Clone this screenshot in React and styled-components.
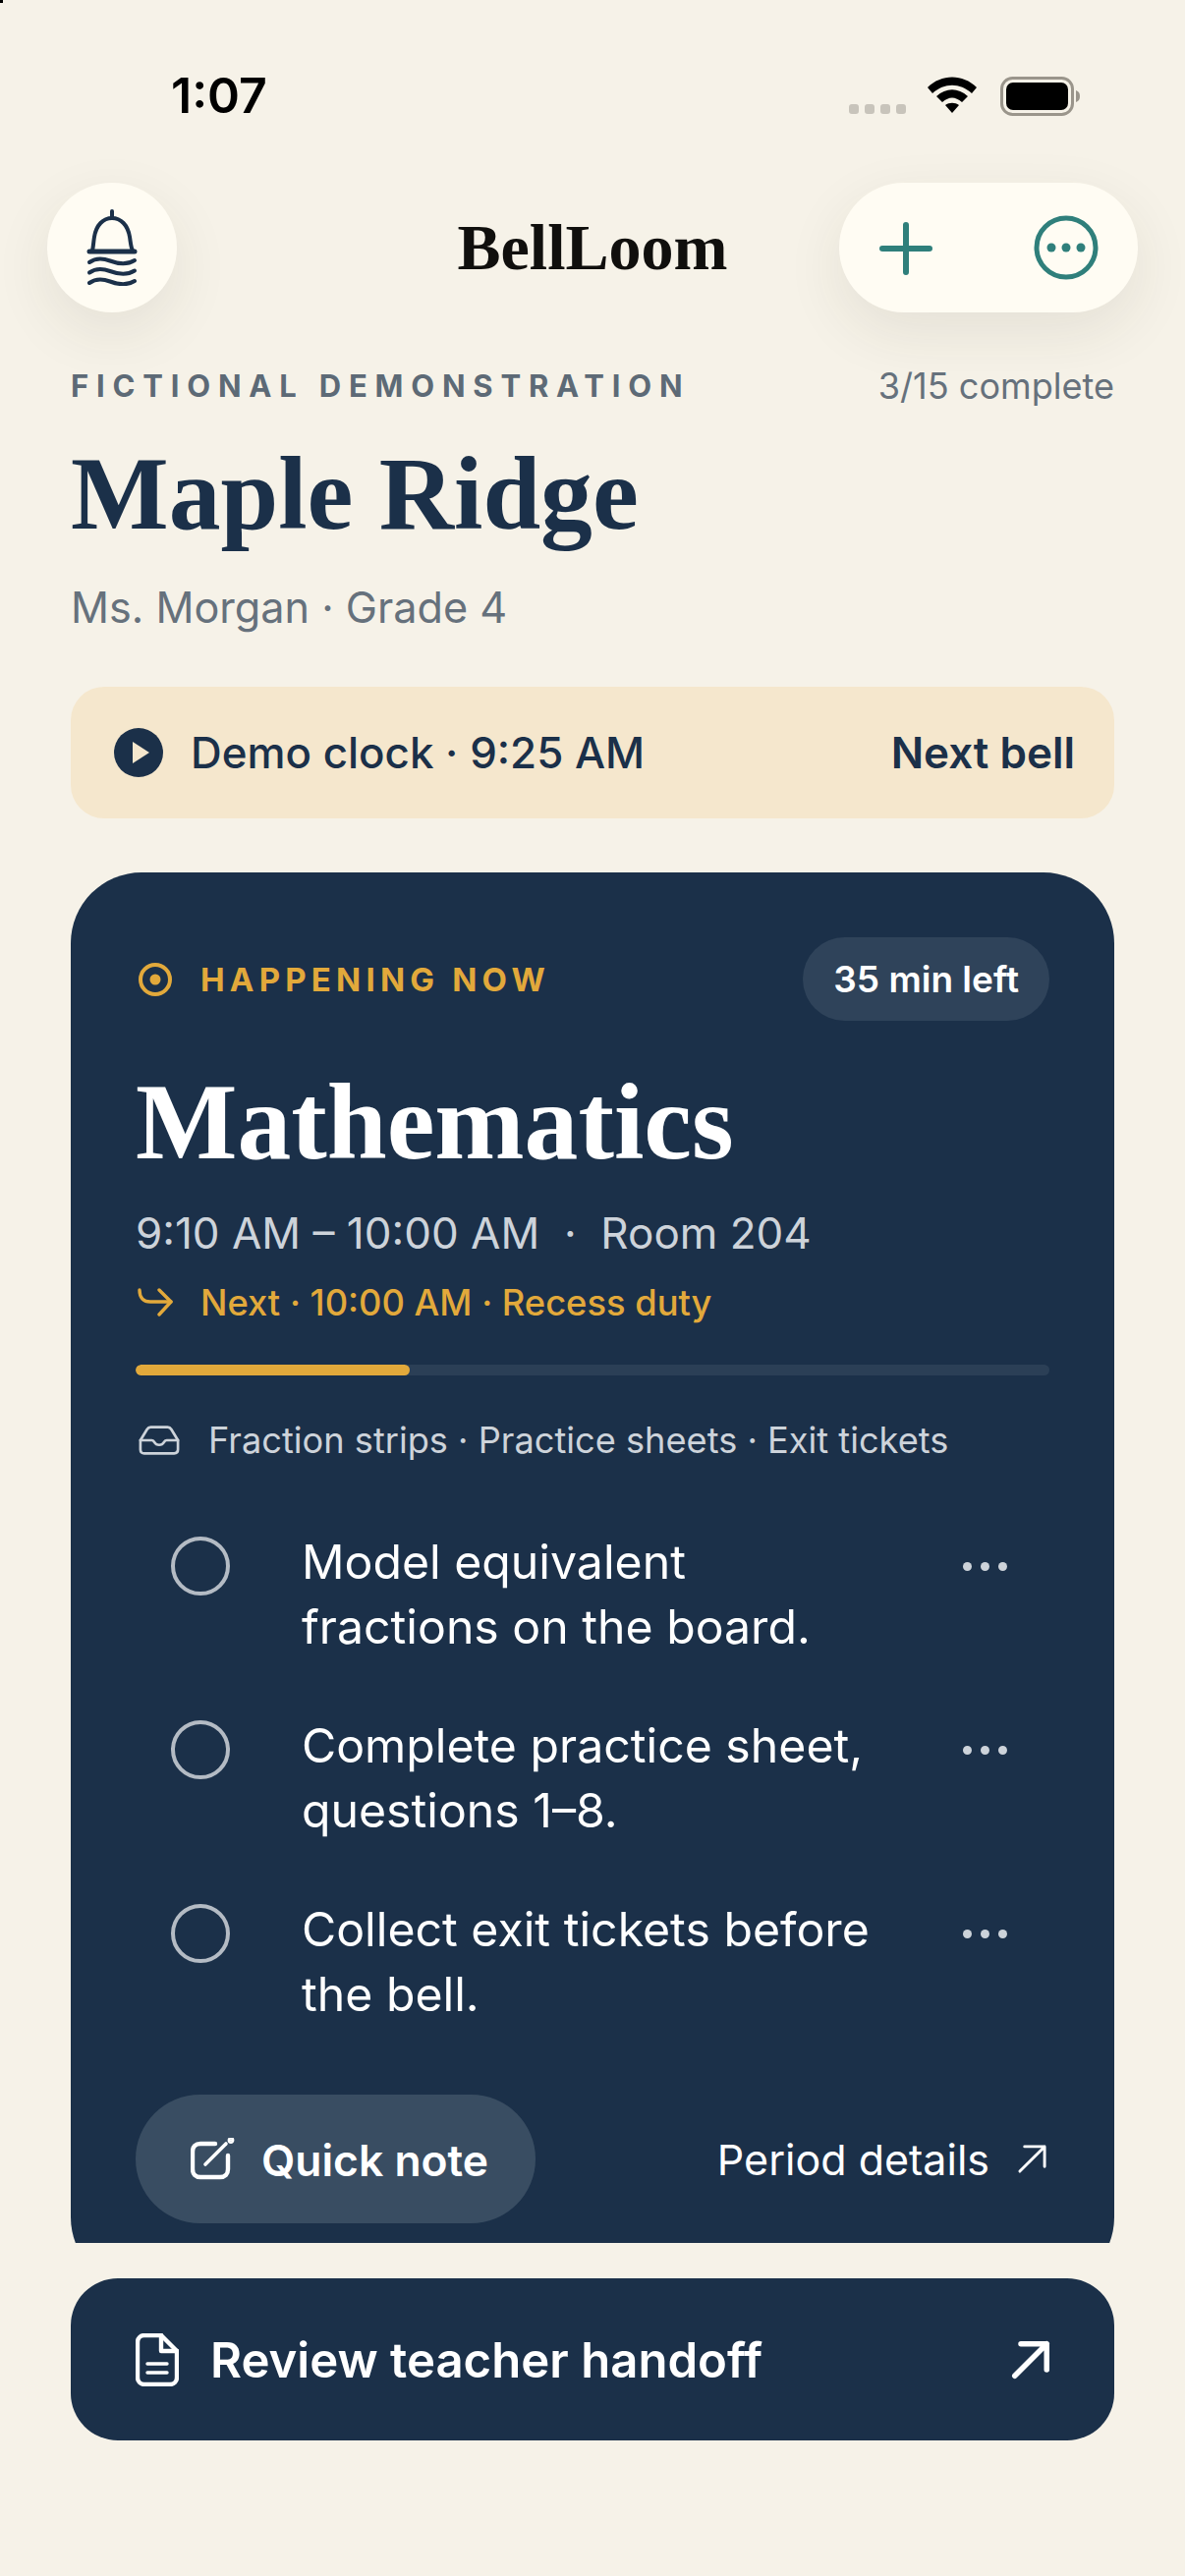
import React from "react";
import styled, { createGlobalStyle } from "styled-components";

const GlobalStyle = createGlobalStyle`
  html, body {
    margin: 0;
    padding: 0;
    background: #f6f2e8;
  }
  * {
    box-sizing: border-box;
  }
`;

const navy = "#1b3049";
const gold = "#e2a93b";
const teal = "#2f7f7b";
const serif = '"Liberation Serif", serif';
const sans = 'Inter, "Noto Sans", sans-serif';

const Page = styled.div`
  position: relative;
  width: 1206px;
  height: 2622px;
  background: #f6f2e8;
  font-family: ${sans};
  color: ${navy};
  overflow: hidden;
`;

const CornerMark = styled.div`
  position: absolute;
  top: 0;
  left: 0;
  width: 3px;
  height: 3px;
  background: #000;
`;

const StatusBar = styled.div`
  height: 186px;
  padding: 0 106px 0 174px;
  display: flex;
  justify-content: space-between;
  align-items: flex-start;
`;

const Clock = styled.div`
  margin-top: 67px;
  font-size: 50px;
  line-height: 60px;
  font-weight: 600;
  color: #000;
`;

const StatusIcons = styled.div`
  margin-top: 78px;
  display: flex;
  align-items: flex-start;
`;

const Signal = styled.div`
  display: flex;
  gap: 6px;
  margin-top: 28px;
  margin-right: 22px;
`;

const SignalDot = styled.span`
  width: 10px;
  height: 10px;
  border-radius: 3px;
  background: #c8c4bb;
`;

const WifiSlot = styled.div`
  margin-right: 24px;
`;

const Header = styled.header`
  height: 132px;
  padding: 0 48px;
  display: grid;
  grid-template-columns: 1fr auto 1fr;
  align-items: center;
`;

const BellButton = styled.div`
  width: 132px;
  height: 132px;
  border-radius: 50%;
  background: #fffcf3;
  box-shadow: 0 20px 60px rgba(60, 50, 30, 0.09);
  display: flex;
  align-items: center;
  justify-content: center;
`;

const Brand = styled.div`
  font-family: ${serif};
  font-size: 66px;
  font-weight: 700;
  color: #100f0d;
`;

const ActionPill = styled.div`
  justify-self: end;
  width: 304px;
  height: 132px;
  border-radius: 66px;
  background: #fffcf3;
  box-shadow: 0 20px 60px rgba(60, 50, 30, 0.09);
  display: flex;
  align-items: center;
  justify-content: space-between;
  padding: 0 40px 0 41px;
`;

const PlusSlot = styled.div`
  display: flex;
  margin-top: 2px;
`;

const Content = styled.main`
  padding: 0 72px;
`;

const MetaRow = styled.div`
  margin-top: 56px;
  display: flex;
  justify-content: space-between;
  align-items: center;
`;

const Eyebrow = styled.div`
  font-size: 31px;
  line-height: 38px;
  font-weight: 700;
  letter-spacing: 7.8px;
  color: #5d6a76;
`;

const Progress = styled.div`
  font-size: 36.1px;
  line-height: 38px;
  color: #66717c;
`;

const SchoolName = styled.h1`
  margin: 33px 0 0;
  font-family: ${serif};
  font-size: 105.6px;
  line-height: 116px;
  font-weight: 700;
  color: ${navy};
`;

const Teacher = styled.div`
  margin-top: 29px;
  font-size: 43.2px;
  line-height: 56px;
  color: #66717c;
`;

const ClockBar = styled.div`
  margin-top: 53px;
  height: 134px;
  border-radius: 34px;
  background: #f5e7cd;
  padding: 0 40px 0 44px;
  display: flex;
  align-items: center;
  justify-content: space-between;
`;

const ClockLabel = styled.div`
  display: flex;
  align-items: center;
  gap: 28px;
  font-size: 43.9px;
  font-weight: 500;
`;

const NextBell = styled.div`
  font-size: 44px;
  font-weight: 600;
`;

const CardClip = styled.div`
  margin-top: 55px;
  height: 1395px;
  overflow: hidden;
`;

const Card = styled.section`
  border-radius: 72px;
  background: ${navy};
  padding: 66px 66px 40px;
  height: 1441px;
`;

const CardTop = styled.div`
  display: flex;
  justify-content: space-between;
  align-items: center;
`;

const NowLabel = styled.div`
  display: flex;
  align-items: center;
  gap: 29px;
  padding-left: 3px;
  font-size: 33px;
  font-weight: 700;
  letter-spacing: 5.2px;
  color: ${gold};
`;

const TimeLeft = styled.div`
  height: 85px;
  padding: 0 31px;
  border-radius: 43px;
  background: #2f435a;
  color: #fff;
  font-size: 37px;
  font-weight: 600;
  display: flex;
  align-items: center;
`;

const Subject = styled.h2`
  margin: 38px 0 0;
  font-family: ${serif};
  font-size: 109.6px;
  line-height: 130px;
  font-weight: 700;
  color: #fff;
`;

const Schedule = styled.div`
  margin-top: 20px;
  font-size: 44px;
  line-height: 56px;
  color: #cdd3da;
  white-space: pre;
`;

const NextUp = styled.div`
  margin-top: 20px;
  padding-left: 2px;
  display: flex;
  align-items: center;
  gap: 28px;
  font-size: 36.3px;
  line-height: 46px;
  font-weight: 500;
  color: ${gold};
`;

const Track = styled.div`
  margin-top: 40px;
  height: 11px;
  border-radius: 6px;
  background: #2b3f56;
  overflow: hidden;
`;

const TrackFill = styled.div`
  height: 100%;
  border-radius: 6px;
  background: ${gold};
`;

const Materials = styled.div`
  margin-top: 44px;
  padding-left: 3px;
  display: flex;
  align-items: center;
  gap: 29px;
  font-size: 36.2px;
  line-height: 44px;
  color: #cdd3da;
`;

const TaskList = styled.ul`
  list-style: none;
  margin: 69px 0 0;
  padding: 0;
  display: flex;
  flex-direction: column;
  gap: 56px;
`;

const Task = styled.li`
  display: flex;
  align-items: flex-start;
  padding-left: 36px;
`;

const TaskCircle = styled.span`
  flex: none;
  margin-top: 7px;
  width: 60px;
  height: 60px;
  border-radius: 50%;
  border: 4px solid #b4bbc4;
`;

const TaskText = styled.div`
  margin-left: 73px;
  font-size: 48.2px;
  line-height: 65.5px;
  color: #fff;
  max-width: 590px;
`;

const TaskDots = styled.div`
  margin-left: auto;
  margin-right: 43px;
  margin-top: 33px;
  display: flex;
  gap: 9px;
`;

const Dot = styled.span`
  width: 9px;
  height: 9px;
  border-radius: 50%;
  background: #cdd3da;
`;

const CardFooter = styled.div`
  margin-top: 70px;
  display: flex;
  justify-content: space-between;
  align-items: center;
`;

const QuickNote = styled.div`
  width: 407px;
  height: 131px;
  border-radius: 66px;
  background: #394d62;
  color: #fff;
  display: flex;
  align-items: center;
  gap: 26px;
  padding-left: 56px;
  font-size: 44.4px;
  font-weight: 600;
`;

const NoteLabel = styled.span`
  margin-top: 2px;
`;

const DetailsLink = styled.div`
  display: flex;
  align-items: center;
  gap: 28px;
  padding-right: 2px;
  font-size: 43px;
  color: #fff;
`;

const HandoffButton = styled.div`
  margin-top: 36px;
  height: 165px;
  border-radius: 48px;
  background: ${navy};
  color: #fff;
  display: flex;
  align-items: center;
  justify-content: space-between;
  padding: 0 65px 0 66px;
  font-size: 49.1px;
  font-weight: 600;
`;

const HandoffLabel = styled.div`
  display: flex;
  align-items: center;
  gap: 32px;
`;

const WifiIcon = () => (
  <svg width="50" height="38" viewBox="0 0 50 38">
    <path d="M0 11 C14 -3 36 -3 50 11 L45 17 C33 6 17 6 5 17Z" fill="#000" />
    <path d="M9 20 C19 11 31 11 41 20 L35 26 C28 20 22 20 15 26Z" fill="#000" />
    <path d="M18 29 C22 26 28 26 32 29 L25 37Z" fill="#000" />
  </svg>
);

const BatteryIcon = () => (
  <svg width="82" height="40" viewBox="0 0 82 40">
    <rect x="1.5" y="1.5" width="72" height="37" rx="11" fill="none" stroke="#9a958b" strokeWidth="3" />
    <rect x="6" y="6" width="63" height="28" rx="7" fill="#000" />
    <path d="M77 14 C80 15 81 17 81 20 C81 23 80 25 77 26Z" fill="#9a958b" />
  </svg>
);

const BellIcon = () => (
  <svg width="52" height="78" viewBox="0 0 52 78" fill="none" stroke={navy} strokeWidth="4" strokeLinecap="round" strokeLinejoin="round">
    <path d="M26 2V9" />
    <path d="M6 42C7 38 7 34 8 28C10 16 17 9 26 9C35 9 42 16 44 28C45 34 45 38 47 42" />
    <path d="M3 43H49" strokeWidth="5" />
    <path d="M3 54C10 49 17 50 24 52.5C32 55.5 41 57 49 52" />
    <path d="M3 64.5C10 59.5 17 60.5 24 63C32 66 41 67.5 49 62.5" />
    <path d="M3 75C10 70 17 71 24 73.5C32 76.5 41 78 49 73" />
  </svg>
);

const PlusIcon = () => (
  <svg width="54" height="54" viewBox="0 0 54 54" fill="none" stroke={teal} strokeWidth="6" strokeLinecap="round">
    <path d="M27 3V51M3 27H51" />
  </svg>
);

const MoreIcon = () => (
  <svg width="66" height="66" viewBox="0 0 66 66">
    <circle cx="33" cy="33" r="30" fill="none" stroke={teal} strokeWidth="5" />
    <circle cx="18" cy="33" r="4.5" fill={teal} />
    <circle cx="33" cy="33" r="4.5" fill={teal} />
    <circle cx="48" cy="33" r="4.5" fill={teal} />
  </svg>
);

const PlayIcon = () => (
  <svg width="50" height="50" viewBox="0 0 50 50">
    <circle cx="25" cy="25" r="25" fill={navy} />
    <path d="M19 14L36 25L19 36Z" fill="#f5e7cd" />
  </svg>
);

const TargetIcon = () => (
  <svg width="34" height="34" viewBox="0 0 34 34">
    <circle cx="17" cy="17" r="15" fill="none" stroke={gold} strokeWidth="4" />
    <circle cx="17" cy="17" r="5.5" fill={gold} />
  </svg>
);

const NextArrowIcon = () => (
  <svg width="36" height="30" viewBox="0 0 36 30" fill="none" stroke={gold} strokeWidth="3.4" strokeLinecap="round" strokeLinejoin="round">
    <path d="M2 2C2 10 6 14 13 14H34" />
    <path d="M22 2L34 14L22 27" />
  </svg>
);

const TrayIcon = () => (
  <svg width="42" height="32" viewBox="0 0 44 32" fill="none" stroke="#cdd3da" strokeWidth="2.8" strokeLinecap="round" strokeLinejoin="round">
    <path d="M2 16L9 4.5C10 2.8 11.5 2 13 2H31C32.5 2 34 2.8 35 4.5L42 16V26C42 28.5 40.5 30 38 30H6C3.5 30 2 28.5 2 26Z" />
    <path d="M2 16H14C15.5 16 16 16.8 16.8 18C18 20 20 21 22 21C24 21 26 20 27.2 18C28 16.8 28.5 16 30 16H42" />
  </svg>
);

const NoteIcon = () => (
  <svg width="46" height="44" viewBox="0 0 46 44" fill="none" stroke="#fff" strokeWidth="4.4" strokeLinecap="round" strokeLinejoin="round">
    <path d="M25 6H10C5 6 2 9 2 14V32C2 37 5 40 10 40H30C35 40 38 37 38 32V18" />
    <path d="M15 27L36 6" strokeWidth="3.6" />
    <circle cx="41" cy="2.5" r="1.2" fill="#fff" />
  </svg>
);

const DocIcon = () => (
  <svg width="44" height="54" viewBox="0 0 44 54" fill="none" stroke="#fff" strokeWidth="4.4" strokeLinecap="round" strokeLinejoin="round">
    <path d="M26 2H9C5 2 2 5 2 9V45C2 49 5 52 9 52H35C39 52 42 49 42 45V18Z" />
    <path d="M26 2V18H42" />
    <path d="M12 31H32M12 40H32" strokeWidth="3.4" />
  </svg>
);

const ArrowIcon = ({ size, weight }) => (
  <svg width={size} height={size} viewBox="0 0 32 32" fill="none" stroke="#fff" strokeWidth={weight} strokeLinecap="round" strokeLinejoin="round">
    <path d="M3 29L29 3M8 3H29V24" />
  </svg>
);

const tasks = [
  "Model equivalent fractions on the board.",
  "Complete practice sheet, questions 1–8.",
  "Collect exit tickets before the bell.",
];

const App = () => (
  <Page>
    <GlobalStyle />
    <CornerMark />
    <StatusBar>
      <Clock>1:07</Clock>
      <StatusIcons>
        <Signal>
          <SignalDot />
          <SignalDot />
          <SignalDot />
          <SignalDot />
        </Signal>
        <WifiSlot>
          <WifiIcon />
        </WifiSlot>
        <BatteryIcon />
      </StatusIcons>
    </StatusBar>
    <Header>
      <BellButton>
        <BellIcon />
      </BellButton>
      <Brand>BellLoom</Brand>
      <ActionPill>
        <PlusSlot>
          <PlusIcon />
        </PlusSlot>
        <MoreIcon />
      </ActionPill>
    </Header>
    <Content>
      <MetaRow>
        <Eyebrow>FICTIONAL DEMONSTRATION</Eyebrow>
        <Progress>3/15 complete</Progress>
      </MetaRow>
      <SchoolName>Maple Ridge</SchoolName>
      <Teacher>Ms. Morgan · Grade 4</Teacher>
      <ClockBar>
        <ClockLabel>
          <PlayIcon />
          Demo clock · 9:25 AM
        </ClockLabel>
        <NextBell>Next bell</NextBell>
      </ClockBar>
      <CardClip>
        <Card>
          <CardTop>
            <NowLabel>
              <TargetIcon />
              HAPPENING NOW
            </NowLabel>
            <TimeLeft>35 min left</TimeLeft>
          </CardTop>
          <Subject>Mathematics</Subject>
          <Schedule>9:10 AM – 10:00 AM  ·  Room 204</Schedule>
          <NextUp>
            <NextArrowIcon />
            Next · 10:00 AM · Recess duty
          </NextUp>
          <Track>
            <TrackFill style={{ width: `${(15 / 50) * 100}%` }} />
          </Track>
          <Materials>
            <TrayIcon />
            Fraction strips · Practice sheets · Exit tickets
          </Materials>
          <TaskList>
            {tasks.map((task) => (
              <Task key={task}>
                <TaskCircle />
                <TaskText>{task}</TaskText>
                <TaskDots>
                  <Dot />
                  <Dot />
                  <Dot />
                </TaskDots>
              </Task>
            ))}
          </TaskList>
          <CardFooter>
            <QuickNote>
              <NoteIcon />
              <NoteLabel>Quick note</NoteLabel>
            </QuickNote>
            <DetailsLink>
              Period details
              <ArrowIcon size={31} weight={3} />
            </DetailsLink>
          </CardFooter>
        </Card>
      </CardClip>
      <HandoffButton>
        <HandoffLabel>
          <DocIcon />
          Review teacher handoff
        </HandoffLabel>
        <ArrowIcon size={40} weight={4.4} />
      </HandoffButton>
    </Content>
  </Page>
);

export default App;
